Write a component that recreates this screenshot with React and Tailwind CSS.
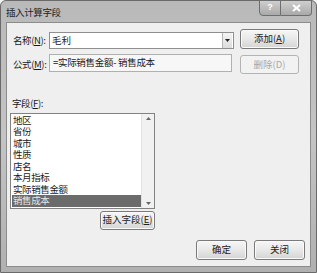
import React from 'react'

// 插入计算字段 dialog — Win7 style, grayscale
const FONT = { fontFamily: '"Noto Sans CJK SC", "Liberation Sans", sans-serif' }

const FIELDS = ['地区', '省份', '城市', '性质', '店名', '本月指标', '实际销售金额', '销售成本']

function Btn({ children, className = '', disabled = false }) {
  return (
    <div
      className={
        'flex items-center justify-center rounded-[3px] border text-[9.5px] leading-none ' +
        (disabled
          ? 'border-[#b4b4b4] bg-[#f2f2f2] text-[#a8a8a8] '
          : 'border-[#7a7a7a] bg-gradient-to-b from-[#f6f6f6] via-[#e8e8e8] to-[#d4d4d4] text-[#222] shadow-[inset_0_0_0_1px_#fafafa] ') +
        className
      }
    >
      {children}
    </div>
  )
}

export default function App() {
  return (
    <div className="w-[317px] h-[273px] bg-[#f4f4f4]" style={FONT}>
      <div className="w-[317px] h-[273px] flex flex-col rounded-t-[6px] border border-[#6a6a6a] bg-gradient-to-b from-[#b9b9b9] via-[#c4c4c4] to-[#b0b0b0]">
        {/* title bar */}
        <div className="h-[21px] flex items-start justify-between pl-[5px] pr-[4px]">
          <span className="mt-[7px] text-[9.5px] leading-none text-[#1e1e1e] tracking-[-0.4px]">插入计算字段</span>
          <div className="flex -mt-px">
            <div className="w-[22px] h-[16px] flex items-center justify-center border border-[#6e6e6e] rounded-bl-[4px] bg-gradient-to-b from-[#cfcfcf] to-[#a9a9a9] text-[9px] text-white font-bold" style={{ fontFamily: '"Liberation Sans", sans-serif' }}>?</div>
            <div className="w-[31px] h-[16px] flex items-center justify-center border border-l-0 border-[#6e6e6e] rounded-br-[4px] bg-gradient-to-b from-[#cfcfcf] to-[#a9a9a9]">
              <svg width="9" height="8" viewBox="0 0 9 8">
                <path d="M1 1 L8 7 M8 1 L1 7" stroke="#fff" strokeWidth="2" />
              </svg>
            </div>
          </div>
        </div>

        {/* client area */}
        <div className="mx-[5px] h-[245px] border border-[#8c8c8c] bg-[#efefef] text-[#1a1a1a] flex flex-col pl-[3px] pr-[9px]">
          {/* name row */}
          <div className="flex items-start mt-[6px]">
            <span className="mt-[7px] w-[39px] pl-[3px] text-[9.5px] leading-none tracking-[-0.4px]">名称(<u>N</u>):</span>
            <div className="mt-[3px] w-[185px] h-[17px] flex items-center border border-[#8f8f8f] bg-white">
              <span className="pl-[2px] text-[9.5px] leading-none flex-1">毛利</span>
              <div className="w-[10px] h-[15px] mr-px border-l border-[#b5b5b5] bg-gradient-to-b from-[#f4f4f4] to-[#dcdcdc] flex items-center justify-center">
                <svg width="5" height="3" viewBox="0 0 5 3"><path d="M0 0 H5 L2.5 3 Z" fill="#222" /></svg>
              </div>
            </div>
            <Btn className="ml-[6px] w-[59px] h-[20px]">添加(<u>A</u>)</Btn>
          </div>

          {/* formula row */}
          <div className="flex items-start mt-[5px]">
            <span className="mt-[6px] w-[39px] pl-[3px] text-[9.5px] leading-none tracking-[-0.4px]">公式(<u>M</u>):</span>
            <div className="w-[183px] h-[18px] flex items-center border border-[#b0b0b0] bg-[#f7f7f7]">
              <span className="pl-[3px] text-[9.5px] leading-none tracking-[-0.3px]">=实际销售金额- 销售成本</span>
            </div>
            <Btn disabled className="ml-[8px] mt-px w-[59px] h-[19px]">删除(D)</Btn>
          </div>

          {/* field list */}
          <span className="mt-[25px] pl-[2px] text-[9.5px] leading-none tracking-[-0.4px]">字段(<u>F</u>):</span>
          <div className="mt-[4px] w-[145px] h-[96px] border border-[#828282] bg-white flex">
            <div className="flex-1 flex flex-col pt-[1px] pl-px">
              {FIELDS.map((f, i) => (
                <div
                  key={f}
                  className={
                    'h-[11.5px] pl-[1px] text-[9.5px] leading-[11.5px] tracking-[-0.4px] ' +
                    (i === FIELDS.length - 1 ? 'bg-[#6b6b6b] text-[#e6e6e6]' : 'text-[#1a1a1a]')
                  }
                >
                  {f}
                </div>
              ))}
            </div>
            <div className="w-[13px] flex flex-col justify-between items-center border-l border-[#e2e2e2] bg-[#f1f1f1] py-[3px]">
              <svg width="5" height="3" viewBox="0 0 5 3"><path d="M0 3 H5 L2.5 0 Z" fill="#666" /></svg>
              <svg width="5" height="3" viewBox="0 0 5 3"><path d="M0 0 H5 L2.5 3 Z" fill="#666" /></svg>
            </div>
          </div>

          <Btn className="ml-[90px] mt-[2px] w-[55px] h-[19px]">插入字段(<u>E</u>)</Btn>

          {/* bottom buttons */}
          <div className="flex justify-end mt-[10px] gap-[7px] -mr-[4px]">
            <Btn className="w-[51px] h-[20px]">确定</Btn>
            <Btn className="w-[51px] h-[20px]">关闭</Btn>
          </div>
        </div>
      </div>
    </div>
  )
}
